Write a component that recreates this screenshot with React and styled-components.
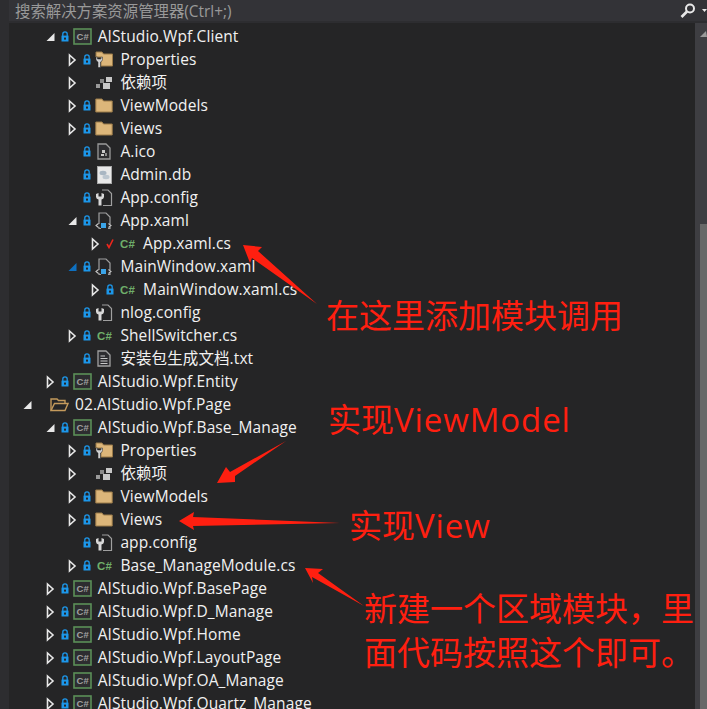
import styled, { createGlobalStyle } from "styled-components";

const GlobalStyle = createGlobalStyle`
  html, body {
    margin: 0;
    padding: 0;
    background: #252526;
  }
`;

const Shell = styled.div`
  position: relative;
  display: flex;
  width: 707px;
  height: 709px;
  overflow: hidden;
  background: #2d2d30;
  font-family: "Open Sans", "Noto Sans CJK SC", sans-serif;
`;

const Main = styled.div`
  flex: 1;
  display: flex;
  flex-direction: column;
  margin-left: 9px;
  min-width: 0;
`;

const SearchBar = styled.div`
  flex: none;
  display: flex;
  align-items: center;
  justify-content: space-between;
  height: 21px;
  padding: 0 0 0 6px;
  background: #333337;
  border-bottom: 2px solid #2d2d30;
  color: #999999;
  font-size: 15.4px;
  white-space: nowrap;
`;

const SearchTools = styled.div`
  display: flex;
  align-items: center;
  gap: 6px;
`;

const Body = styled.div`
  flex: 1;
  display: flex;
  min-height: 0;
`;

const Tree = styled.div`
  flex: 1;
  display: flex;
  flex-direction: column;
  padding-top: 2px;
  background: #252526;
  overflow: hidden;
`;

const Row = styled.div`
  flex: none;
  display: flex;
  align-items: center;
  height: 23px;
  padding-left: ${(p) => 14 + p.$level * 22.7}px;
  color: #f1f1f1;
  font-size: 15.5px;
  letter-spacing: 0.1px;
  white-space: nowrap;
`;

const ExpanderSlot = styled.span`
  flex: none;
  display: flex;
  width: 15px;
`;

const LockSlot = styled.span`
  flex: none;
  display: flex;
  width: 12px;
`;

const IconSlot = styled.span`
  flex: none;
  display: flex;
  width: 25px;
`;

const Label = styled.span`
  line-height: 23px;
`;

const Scrollbar = styled.div`
  flex: none;
  display: flex;
  flex-direction: column;
  align-items: flex-end;
  justify-content: space-between;
  width: 12px;
  background: #3e3e42;
`;

const ScrollArrow = styled.div`
  width: 0;
  height: 0;
  margin: 8px 0 0;
  border-left: 6px solid transparent;
  border-bottom: 6px solid #999999;
  border-right: 1px solid transparent;
`;

const ScrollThumb = styled.div`
  width: 7px;
  height: 485px;
  background: #686868;
`;

const Note = styled.div`
  position: absolute;
  left: ${(p) => p.$x}px;
  top: ${(p) => p.$y}px;
  color: #ff1f10;
  font-family: "Noto Sans CJK SC", "Liberation Sans", sans-serif;
  font-size: 33px;
  font-weight: 400;
  line-height: 44px;
  white-space: nowrap;
`;

const Latin = styled.span`
  font-family: "Open Sans", sans-serif;
  letter-spacing: 0.9px;
`;

const ArrowLayer = styled.svg`
  position: absolute;
  left: 0;
  top: 0;
  pointer-events: none;
`;

const Expander = ({ kind }) => {
  if (kind === "closed")
    return (
      <svg width="9" height="14" viewBox="0 0 9 14">
        <path d="M1.5 2 L7 7 L1.5 12 Z" fill="none" stroke="#e8e8e8" strokeWidth="1.6" />
      </svg>
    );
  if (kind === "open" || kind === "openBlue")
    return (
      <svg width="9" height="14" viewBox="0 0 9 14">
        <path d="M8.5 3 L8.5 11 L0.5 11 Z" fill={kind === "open" ? "#e8e8e8" : "#0e70c0"} />
      </svg>
    );
  return null;
};

const Lock = () => (
  <svg width="8" height="11" viewBox="0 0 8 11">
    <path d="M1.8 5 V3 a2.2 2.2 0 0 1 4.4 0 V5" fill="none" stroke="#1c97ea" strokeWidth="1.3" />
    <rect x="0.5" y="4.6" width="7" height="5.9" fill="#1c97ea" />
    <rect x="3" y="6.6" width="2" height="2" fill="#252526" />
  </svg>
);

const Check = () => (
  <svg width="8" height="11" viewBox="0 0 8 11">
    <path d="M1 6 L3 9.5 L7 1.5" fill="none" stroke="#f0261c" strokeWidth="1.6" />
  </svg>
);

const Project = () => (
  <svg width="19" height="17" viewBox="0 0 19 17">
    <rect x="1" y="1" width="17" height="15" fill="#2d2d30" stroke="#5b8f58" strokeWidth="1.6" />
    <text x="3.5" y="12" fontSize="9.5" fontWeight="700" fontFamily="Liberation Sans" fill="#a0a0a0">
      C#
    </text>
  </svg>
);

const CsFile = () => (
  <svg width="18" height="12" viewBox="-2 0 18 12">
    <text x="0" y="10" fontSize="11.5" fontWeight="700" fontFamily="Liberation Sans" fill="#6fae6a">
      C#
    </text>
  </svg>
);

const Folder = ({ open }) =>
  open ? (
    <svg width="19" height="15" viewBox="0 0 19 15">
      <path d="M1 13.5 V2 H7 L8.5 3.5 H15 V6" fill="none" stroke="#c49a5c" strokeWidth="1.4" />
      <path d="M1 13.5 L4.5 6.5 H18 L15 13.5 Z" fill="#252526" stroke="#c49a5c" strokeWidth="1.4" />
    </svg>
  ) : (
    <svg width="18" height="15" viewBox="0 0 18 15">
      <path d="M0.8 14 V1 H7 L8.5 3 H17.2 V14 Z" fill="#dcb67a" stroke="#9a7a48" strokeWidth="1" />
    </svg>
  );

const PropertiesIcon = () => (
  <svg width="18" height="17" viewBox="0 0 18 17">
    <path d="M1 6 V1 H7 L8.5 3 H17.5 V15 H6 V6 Z" fill="#dcb67a" stroke="#9a7a48" strokeWidth="1" />
    <path d="M1 6 V8.5 A3 3 0 0 0 3 11 V16.5 H5.5 V11 A3 3 0 0 0 7.5 8.5 V6 H6 V8 H2.5 V6 Z" fill="#d0d0d0" stroke="#252526" strokeWidth="0.5" />
  </svg>
);

const DepsIcon = () => (
  <svg width="18" height="14" viewBox="0 0 18 14">
    <rect x="11" y="1" width="6" height="5" fill="#c8c8c8" />
    <rect x="8" y="7" width="7" height="6" fill="#c8c8c8" />
    <rect x="1" y="8" width="4" height="4" fill="#9a9a9a" />
    <rect x="5" y="3" width="4" height="4" fill="#8a8a8a" />
  </svg>
);

const IcoIcon = () => (
  <svg width="16" height="17" viewBox="-2 0 16 17">
    <path d="M1 1 H9 L13 5 V16 H1 Z" fill="#2d2d30" stroke="#9a9a9a" strokeWidth="1.3" />
    <rect x="5" y="7" width="3" height="3" fill="#c8c8c8" />
    <rect x="8" y="10" width="2" height="3" fill="#8a8a8a" />
    <rect x="4" y="11" width="3" height="2" fill="#c8c8c8" />
  </svg>
);

const DbIcon = () => (
  <svg width="17" height="18" viewBox="-2 0 17 18">
    <rect x="0.5" y="0.5" width="14" height="17" fill="#e8e8e8" stroke="#a8a8a8" />
    <ellipse cx="6" cy="7" rx="3.5" ry="2.2" fill="#a9b6c2" />
    <ellipse cx="9" cy="11" rx="3.5" ry="2.2" fill="#bcc6cf" />
  </svg>
);

const ConfigIcon = () => (
  <svg width="18" height="18" viewBox="0 0 18 18">
    <path d="M7 1 H13 L16.5 4.5 V16.5 H8" fill="none" stroke="#a0a0a0" strokeWidth="1.2" />
    <path
      d="M1 5 V8 A3 3 0 0 0 3.5 10.5 V16.5 H6.5 V10.5 A3 3 0 0 0 9 8 V5 L6.5 4 V7.5 H3.5 V4 Z"
      fill="#d8d8d8"
    />
  </svg>
);

const XamlIcon = () => (
  <svg width="18" height="18" viewBox="0 0 18 18">
    <path d="M4 12 V1 H11 L15 5 V12 M13 16.5 H15 V15 M4 15 V16.5 H6" fill="none" stroke="#a0a0a0" strokeWidth="1.2" />
    <path d="M3.5 11.5 L1 13.5 L3.5 15.5 M13.5 11.5 L16 13.5 L13.5 15.5" fill="none" stroke="#c8c8c8" strokeWidth="1.1" />
    <rect x="6" y="11" width="5" height="5" fill="#3ba4e8" />
  </svg>
);

const TextIcon = () => (
  <svg width="16" height="17" viewBox="-2 0 16 17">
    <path d="M1 1 H9 L13 5 V16 H1 Z" fill="#2d2d30" stroke="#a0a0a0" strokeWidth="1.3" />
    <path d="M3.5 6 H8 M3.5 8.5 H10.5 M3.5 11 H10.5 M3.5 13.5 H10.5" stroke="#c8c8c8" strokeWidth="1" />
  </svg>
);

const SearchIcon = () => (
  <svg width="16" height="16" viewBox="0 0 16 16">
    <circle cx="10" cy="5.5" r="4" fill="none" stroke="#e8e8e8" strokeWidth="2" />
    <path d="M7 8.5 L1.5 14" stroke="#e8e8e8" strokeWidth="2.6" />
  </svg>
);

const icons = {
  project: Project,
  cs: CsFile,
  folder: Folder,
  props: PropertiesIcon,
  deps: DepsIcon,
  ico: IcoIcon,
  db: DbIcon,
  config: ConfigIcon,
  xaml: XamlIcon,
  text: TextIcon,
};

const rows = [
  { level: 1, exp: "open", icon: "project", label: "AIStudio.Wpf.Client" },
  { level: 2, exp: "closed", icon: "props", label: "Properties" },
  { level: 2, exp: "closed", icon: "deps", label: "依赖项", noLock: true },
  { level: 2, exp: "closed", icon: "folder", label: "ViewModels" },
  { level: 2, exp: "closed", icon: "folder", label: "Views" },
  { level: 2, icon: "ico", label: "A.ico" },
  { level: 2, icon: "db", label: "Admin.db" },
  { level: 2, icon: "config", label: "App.config" },
  { level: 2, exp: "open", icon: "xaml", label: "App.xaml" },
  { level: 3, exp: "closed", icon: "cs", label: "App.xaml.cs", check: true },
  { level: 2, exp: "openBlue", icon: "xaml", label: "MainWindow.xaml" },
  { level: 3, exp: "closed", icon: "cs", label: "MainWindow.xaml.cs" },
  { level: 2, icon: "config", label: "nlog.config" },
  { level: 2, exp: "closed", icon: "cs", label: "ShellSwitcher.cs" },
  { level: 2, icon: "text", label: "安装包生成文档.txt" },
  { level: 1, exp: "closed", icon: "project", label: "AIStudio.Wpf.Entity" },
  { level: 0, exp: "open", icon: "openFolder", label: "02.AIStudio.Wpf.Page", noLock: true },
  { level: 1, exp: "open", icon: "project", label: "AIStudio.Wpf.Base_Manage" },
  { level: 2, exp: "closed", icon: "props", label: "Properties" },
  { level: 2, exp: "closed", icon: "deps", label: "依赖项", noLock: true },
  { level: 2, exp: "closed", icon: "folder", label: "ViewModels" },
  { level: 2, exp: "closed", icon: "folder", label: "Views" },
  { level: 2, icon: "config", label: "app.config" },
  { level: 2, exp: "closed", icon: "cs", label: "Base_ManageModule.cs" },
  { level: 1, exp: "closed", icon: "project", label: "AIStudio.Wpf.BasePage" },
  { level: 1, exp: "closed", icon: "project", label: "AIStudio.Wpf.D_Manage" },
  { level: 1, exp: "closed", icon: "project", label: "AIStudio.Wpf.Home" },
  { level: 1, exp: "closed", icon: "project", label: "AIStudio.Wpf.LayoutPage" },
  { level: 1, exp: "closed", icon: "project", label: "AIStudio.Wpf.OA_Manage" },
  { level: 1, exp: "closed", icon: "project", label: "AIStudio.Wpf.Quartz_Manage" },
];

const TreeRow = ({ row }) => {
  const Icon = row.icon === "openFolder" ? null : icons[row.icon];
  return (
    <Row $level={row.level}>
      <ExpanderSlot>{row.exp && <Expander kind={row.exp} />}</ExpanderSlot>
      <LockSlot>
        {row.check ? <Check /> : !row.noLock && <Lock />}
      </LockSlot>
      <IconSlot>{Icon ? <Icon /> : <Folder open />}</IconSlot>
      <Label>{row.label}</Label>
    </Row>
  );
};

const arrows = [
  "243,245 262,247 258,251 317,304 252,258 250,263",
  "217,483 226,467 230,472 286,441 235,476 235,482",
  "179,521 194,512 193,517 340,523 193,526 194,530",
  "305,568 323,569 318,573 364,606 312,577 313,583",
];

const App = () => {
  return (
    <Shell>
      <GlobalStyle />
      <Main>
        <SearchBar>
          搜索解决方案资源管理器(Ctrl+;)
          <SearchTools>
            <SearchIcon />
            <svg width="5" height="3" viewBox="0 0 5 3">
              <path d="M0 0 H5 L2.5 3 Z" fill="#e8e8e8" />
            </svg>
          </SearchTools>
        </SearchBar>
        <Body>
          <Tree>
            {rows.map((row, i) => (
              <TreeRow key={i} row={row} />
            ))}
          </Tree>
          <Scrollbar>
            <ScrollArrow />
            <ScrollThumb />
          </Scrollbar>
        </Body>
      </Main>
      <ArrowLayer width="707" height="709" viewBox="0 0 707 709">
        {arrows.map((points) => (
          <polygon key={points} points={points} fill="#ff1f10" />
        ))}
      </ArrowLayer>
      <Note $x={326} $y={292}>在这里添加模块调用</Note>
      <Note $x={328} $y={396}>实现<Latin>ViewModel</Latin></Note>
      <Note $x={349} $y={502}>实现<Latin>View</Latin></Note>
      <Note $x={364} $y={585}>新建一个区域模块，里</Note>
      <Note $x={364} $y={629}>面代码按照这个即可。</Note>
    </Shell>
  );
};

export default App;
